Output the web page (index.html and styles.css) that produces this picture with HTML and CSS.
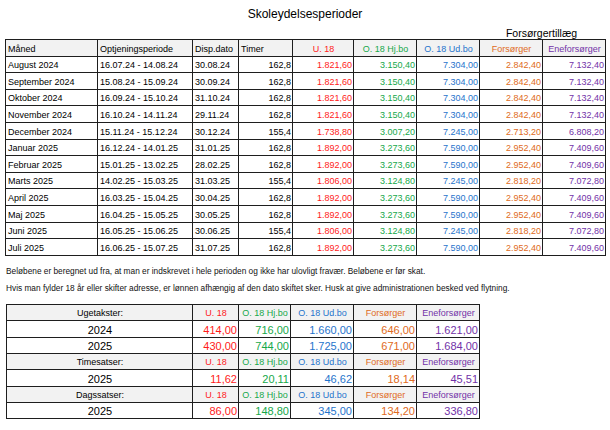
FILE: index.html
```html
<!DOCTYPE html>
<html lang="da">
<head>
<meta charset="utf-8">
<title>Skoleydelsesperioder</title>
<link rel="stylesheet" href="styles.css">
</head>
<body>
<div class="page">
  <h1 class="title">Skoleydelsesperioder</h1>
  <div class="group-row"><div class="group-label">Forsørgertillæg</div></div>
  <table class="periods">
    <colgroup>
      <col class="c-month"><col class="c-period"><col class="c-date"><col class="c-hours">
      <col class="c-u18"><col class="c-hj"><col class="c-ud"><col class="c-fors"><col class="c-enef">
    </colgroup>
    <thead>
      <tr class="head">
        <th class="l">Måned</th><th class="l">Optjeningsperiode</th><th class="l">Disp.dato</th><th class="l">Timer</th>
        <th class="red">U. 18</th><th class="green">O. 18 Hj.bo</th><th class="blue">O. 18 Ud.bo</th><th class="orange">Forsørger</th><th class="purple">Eneforsørger</th>
      </tr>
    </thead>
    <tbody>
      <tr><td>August 2024</td><td>16.07.24 - 14.08.24</td><td>30.08.24</td><td class="n">162,8</td><td class="n red">1.821,60</td><td class="n green">3.150,40</td><td class="n blue">7.304,00</td><td class="n orange">2.842,40</td><td class="n purple">7.132,40</td></tr>
      <tr><td>September 2024</td><td>15.08.24 - 15.09.24</td><td>30.09.24</td><td class="n">162,8</td><td class="n red">1.821,60</td><td class="n green">3.150,40</td><td class="n blue">7.304,00</td><td class="n orange">2.842,40</td><td class="n purple">7.132,40</td></tr>
      <tr><td>Oktober 2024</td><td>16.09.24 - 15.10.24</td><td>31.10.24</td><td class="n">162,8</td><td class="n red">1.821,60</td><td class="n green">3.150,40</td><td class="n blue">7.304,00</td><td class="n orange">2.842,40</td><td class="n purple">7.132,40</td></tr>
      <tr><td>November 2024</td><td>16.10.24 - 14.11.24</td><td>29.11.24</td><td class="n">162,8</td><td class="n red">1.821,60</td><td class="n green">3.150,40</td><td class="n blue">7.304,00</td><td class="n orange">2.842,40</td><td class="n purple">7.132,40</td></tr>
      <tr><td>December 2024</td><td>15.11.24 - 15.12.24</td><td>30.12.24</td><td class="n">155,4</td><td class="n red">1.738,80</td><td class="n green">3.007,20</td><td class="n blue">7.245,00</td><td class="n orange">2.713,20</td><td class="n purple">6.808,20</td></tr>
      <tr><td>Januar 2025</td><td>16.12.24 - 14.01.25</td><td>31.01.25</td><td class="n">162,8</td><td class="n red">1.892,00</td><td class="n green">3.273,60</td><td class="n blue">7.590,00</td><td class="n orange">2.952,40</td><td class="n purple">7.409,60</td></tr>
      <tr><td>Februar 2025</td><td>15.01.25 - 13.02.25</td><td>28.02.25</td><td class="n">162,8</td><td class="n red">1.892,00</td><td class="n green">3.273,60</td><td class="n blue">7.590,00</td><td class="n orange">2.952,40</td><td class="n purple">7.409,60</td></tr>
      <tr><td>Marts 2025</td><td>14.02.25 - 15.03.25</td><td>31.03.25</td><td class="n">155,4</td><td class="n red">1.806,00</td><td class="n green">3.124,80</td><td class="n blue">7.245,00</td><td class="n orange">2.818,20</td><td class="n purple">7.072,80</td></tr>
      <tr><td>April 2025</td><td>16.03.25 - 15.04.25</td><td>30.04.25</td><td class="n">162,8</td><td class="n red">1.892,00</td><td class="n green">3.273,60</td><td class="n blue">7.590,00</td><td class="n orange">2.952,40</td><td class="n purple">7.409,60</td></tr>
      <tr><td>Maj 2025</td><td>16.04.25 - 15.05.25</td><td>30.05.25</td><td class="n">162,8</td><td class="n red">1.892,00</td><td class="n green">3.273,60</td><td class="n blue">7.590,00</td><td class="n orange">2.952,40</td><td class="n purple">7.409,60</td></tr>
      <tr><td>Juni 2025</td><td>16.05.25 - 15.06.25</td><td>30.06.25</td><td class="n">155,4</td><td class="n red">1.806,00</td><td class="n green">3.124,80</td><td class="n blue">7.245,00</td><td class="n orange">2.818,20</td><td class="n purple">7.072,80</td></tr>
      <tr><td>Juli 2025</td><td>16.06.25 - 15.07.25</td><td>31.07.25</td><td class="n">162,8</td><td class="n red">1.892,00</td><td class="n green">3.273,60</td><td class="n blue">7.590,00</td><td class="n orange">2.952,40</td><td class="n purple">7.409,60</td></tr>
    </tbody>
  </table>

  <div class="notes">
    <p>Beløbene er beregnet ud fra, at man er indskrevet i hele perioden og ikke har ulovligt fravær. Beløbene er før skat.</p>
    <p>Hvis man fylder 18 år eller skifter adresse, er lønnen afhængig af den dato skiftet sker. Husk at give administrationen besked ved flytning.</p>
  </div>

  <table class="rates">
    <colgroup>
      <col class="r-label"><col class="r-u18"><col class="r-hj"><col class="r-ud"><col class="r-fors"><col class="r-enef">
    </colgroup>
    <tbody>
      <tr class="head"><th>Ugetakster:</th><th class="red">U. 18</th><th class="green">O. 18 Hj.bo</th><th class="blue">O. 18 Ud.bo</th><th class="orange">Forsørger</th><th class="purple">Eneforsørger</th></tr>
      <tr class="val"><td class="year">2024</td><td class="n red">414,00</td><td class="n green">716,00</td><td class="n blue">1.660,00</td><td class="n orange">646,00</td><td class="n purple">1.621,00</td></tr>
      <tr class="val"><td class="year">2025</td><td class="n red">430,00</td><td class="n green">744,00</td><td class="n blue">1.725,00</td><td class="n orange">671,00</td><td class="n purple">1.684,00</td></tr>
      <tr class="head"><th>Timesatser:</th><th class="red">U. 18</th><th class="green">O. 18 Hj.bo</th><th class="blue">O. 18 Ud.bo</th><th class="orange">Forsørger</th><th class="purple">Eneforsørger</th></tr>
      <tr class="val"><td class="year">2025</td><td class="n red">11,62</td><td class="n green">20,11</td><td class="n blue">46,62</td><td class="n orange">18,14</td><td class="n purple">45,51</td></tr>
      <tr class="head"><th>Dagssatser:</th><th class="red">U. 18</th><th class="green">O. 18 Hj.bo</th><th class="blue">O. 18 Ud.bo</th><th class="orange">Forsørger</th><th class="purple">Eneforsørger</th></tr>
      <tr class="val"><td class="year">2025</td><td class="n red">86,00</td><td class="n green">148,80</td><td class="n blue">345,00</td><td class="n orange">134,20</td><td class="n purple">336,80</td></tr>
    </tbody>
  </table>
</div>
</body>
</html>
```

FILE: styles.css
```css
html, body {
  margin: 0;
  padding: 0;
  background: #ffffff;
}

body {
  font-family: "Liberation Sans", Arial, sans-serif;
  color: #000;
}

.page {
  width: 610px;
  height: 430px;
  overflow: hidden;
}

.title {
  margin: 7px 0 0 0;
  font-size: 12px;
  font-weight: normal;
  line-height: 14px;
  text-align: center;
}

.group-row {
  display: flex;
  justify-content: flex-end;
  width: 604px;
  height: 18px;
}

.group-label {
  width: 125px;
  text-align: center;
  font-size: 10.5px;
  line-height: 12px;
  padding-top: 6px;
}

table {
  border-collapse: collapse;
  table-layout: fixed;
}

td, th {
  border: 1px solid #1e1e1e;
  padding: 0 1px 0 2px;
  white-space: nowrap;
  overflow: hidden;
  vertical-align: bottom;
  font-weight: normal;
}

.periods {
  margin-left: 5px;
  width: 600px;
  font-size: 9px;
}

.periods tr {
  height: 16.6px;
}

.periods td, .periods th {
  line-height: 11px;
  padding-bottom: 1px;
}

.periods .head th {
  background: #f2f2f2;
  text-align: center;
}

.periods .head th.l {
  text-align: left;
}

.c-month { width: 92px; }
.c-period { width: 95px; }
.c-date { width: 46px; }
.c-hours { width: 54px; }
.c-u18 { width: 61px; }
.c-hj { width: 63px; }
.c-ud { width: 63px; }
.c-fors { width: 63px; }
.c-enef { width: 63px; }

.n { text-align: right; }

.red { color: #ff1a1a; }
.green { color: #16a84a; }
.blue { color: #1f74cc; }
.orange { color: #e06a22; }
.purple { color: #7232a8; }

.notes {
  margin: 9px 0 0 6px;
  font-size: 8.3px;
  color: #111;
}

.notes p {
  margin: 0 0 5px 0;
  line-height: 12px;
}

.rates {
  margin: 10px 0 0 6px;
  width: 473px;
}

.r-label { width: 186px; }
.r-u18 { width: 46px; }
.r-hj { width: 52px; }
.r-ud { width: 63px; }
.r-fors { width: 63px; }
.r-enef { width: 63px; }

.rates tr {
  height: 16.4px;
}

.rates .head th {
  background: #f2f2f2;
  font-size: 9px;
  line-height: 11px;
  text-align: center;
  padding-bottom: 1px;
}

.rates .val td {
  font-size: 11px;
  line-height: 13px;
  padding-bottom: 0;
}

.rates td.year {
  text-align: center;
}
```
